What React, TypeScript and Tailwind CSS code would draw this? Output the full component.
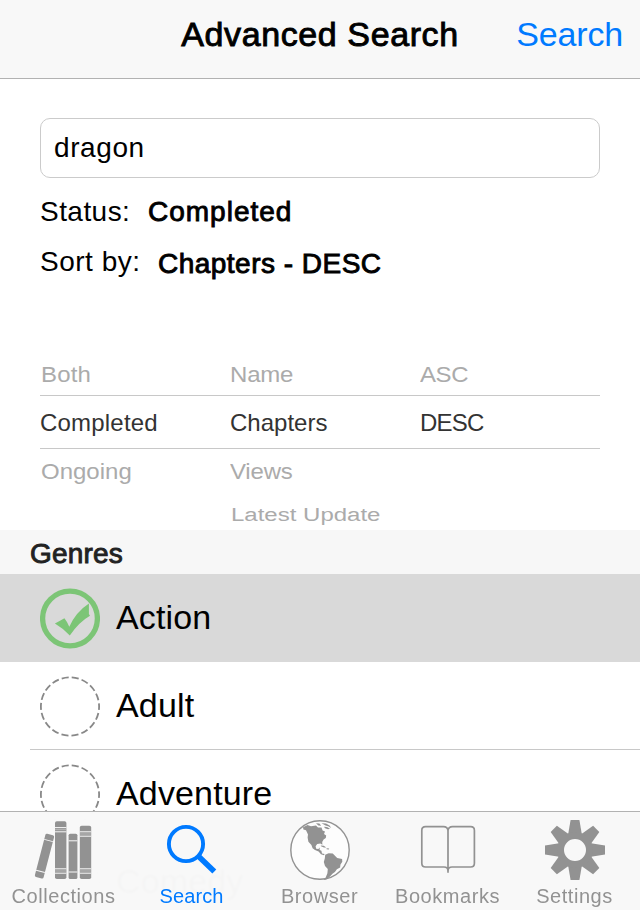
import React from "react";

const GRAY = "#929292";

function CollectionsIcon() {
  return (
    <svg className="h-[60px] w-[60px] shrink-0" viewBox="0 0 60 60" fill={GRAY}>
      <g transform="translate(16 15.3) rotate(14.6)">
        <rect x="-4.6" y="-0.8" width="9" height="44.6" rx="1.6" />
        <path d="M-4.6 5.4h9M-4.6 37.4h9" stroke="#f8f8f8" strokeWidth="1" />
      </g>
      <rect x="21" y="1.3" width="11.4" height="57.8" rx="1.8" />
      <rect x="34.6" y="13.7" width="8.8" height="45.4" rx="1.6" />
      <rect x="45.8" y="5.7" width="11.4" height="53.4" rx="1.8" />
      <path
        d="M21 7.6h11.4M21 11.8h11.4M21 48.8h11.4M21 53.2h11.4M34.6 20.8h8.8M34.6 52h8.8M45.8 11.8h11.4M45.8 16.2h11.4M45.8 48.8h11.4M45.8 53.2h11.4"
        stroke="#f8f8f8"
        strokeWidth="1"
      />
      <path d="M21 9.7h11.4M21 51h11.4M45.8 14h11.4M45.8 51h11.4" stroke="#c4c4c4" strokeWidth=".8" />
    </svg>
  );
}

function SearchIcon() {
  return (
    <svg className="h-[60px] w-[60px] shrink-0" viewBox="0 0 60 60" fill="none" stroke="#007aff">
      <circle cx="24" cy="24" r="17.1" strokeWidth="3.9" />
      <path d="M36.2 36 52.3 51.6" strokeWidth="5.6" />
    </svg>
  );
}

function GlobeIcon() {
  return (
    <svg className="h-[60px] w-[60px] shrink-0" viewBox="0 0 60 60" fill={GRAY}>
      <circle cx="30" cy="30" r="29.2" fill="#fdfdfd" stroke={GRAY} strokeWidth="1.4" />
      <path d="M13 7.2 17.5 5 21 6.2 26 5.6 28 7.6 31.5 7.4 32.6 10.4 35 11.4 34 14 36.2 15.4 35.8 18 33.6 19.4 32.2 22 32.4 24.8 30.4 23.4 27.2 24 25.6 26.2 26.2 28.8 28.4 29 29.8 27.6 29.6 30 31.4 30.8 32 33.4 34.6 34 34 35.2 31 34.2 28.6 31.6 25 30 22.6 28.2 21.4 25 18.4 21.8 17.6 17.6 18 14.4 16 10.2 13.4 9.4Z" />
      <path d="m26 3.2 3.4.3 1.8 2.3-2.8-.3ZM31.5 3.2 36 3.4l3.6 2 1.6 2.7-2.4-1.6-3.2-.9ZM34 6.8l3 .2 3 1.8-2 .4-3-1ZM30.8 25.6l3 .2 2.4 1.6-2.2 0-3-1.1ZM36.6 28.2l2.6.4-.4 1-2.2-.3Z" />
      <path d="m35.2 34.8 3.4-1.6 4.2.4 2.4 2.3 2 2.2 4.9 1 .2 2.6-1.8 2.8-.4 3-3.2 1.8-2 2.6-2.4 1.8-2.5 2.8-3 2.6-3.4 1.2 2.2-3 1.6-4 .4-4.3-2.8-3-1.2-4 1-3.4Z" />
    </svg>
  );
}

function BookIcon() {
  return (
    <svg className="h-[60px] w-[60px] shrink-0" viewBox="0 0 60 60" fill="none" stroke={GRAY} strokeWidth="1.7">
      <path d="M30 52.7V10.5Q29.5 6.7 25.5 6.7H7.5Q3.8 6.7 3.8 10.4V43.3Q3.8 47 7.5 47H26Q30 47 30 51Q30 47 34 47H52.7Q56.4 47 56.4 43.3V10.4Q56.4 6.7 52.7 6.7H34.5Q30.5 6.7 30 10.5" />
    </svg>
  );
}

function GearIcon() {
  return (
    <svg className="h-[60px] w-[60px] shrink-0" viewBox="-30 -30 60 60">
      <g fill={GRAY}>
        {[0, 45, 90, 135, 180, 225, 270, 315].map((angle) => (
          <path key={angle} d="M-4.4-30H4.4L6.8-16H-6.8Z" transform={`rotate(${angle})`} />
        ))}
      </g>
      <circle r="14.4" fill="none" stroke={GRAY} strokeWidth="6.8" />
    </svg>
  );
}

function CheckedMark() {
  return (
    <svg className="h-[61px] w-[60px]" viewBox="0 0 60 61" fill="#7cc576">
      <circle cx="30" cy="30.5" r="27.4" fill="none" stroke="#7cc576" strokeWidth="5.3" />
      <path d="M14.9 35.4Q20 32.8 24.4 30.2Q27.5 34 29.3 38.8Q36 24 48.9 15.6V26L50 27.8Q39 34 29.8 47.6Q23 40 14.9 35.4Z" />
    </svg>
  );
}

function EmptyMark() {
  return (
    <svg className="h-[61px] w-[60px]" viewBox="0 0 60 61">
      <circle cx="30" cy="30.5" r="29.1" fill="none" stroke="#888" strokeWidth="1.8" strokeDasharray="7.1 3.06" strokeDashoffset="3.6" />
    </svg>
  );
}

function Genre({ name, checked = false }: { name: string; checked?: boolean }) {
  return (
    <div className={checked ? "flex h-[88px] items-start bg-[#d9d9d9] pl-10" : "flex h-[88px] items-start pl-10"}>
      <div className="pt-[14px]">{checked ? <CheckedMark /> : <EmptyMark />}</div>
      <span className="pl-4 text-[34px] leading-[86px] tracking-[0.15px]">{name}</span>
    </div>
  );
}

function Tab({ label, icon, active = false }: { label: string; icon: React.ReactNode; active?: boolean }) {
  return (
    <div
      className={
        active
          ? "flex w-32 flex-col items-center tracking-[0.1px] text-[#007aff]"
          : "flex w-32 flex-col items-center tracking-[0.55px] text-[#929292] last:-ml-px"
      }
    >
      {icon}
      <span className="-ml-px text-[20px] leading-[32px]">{label}</span>
    </div>
  );
}

export default function App() {
  return (
    <div className="relative flex h-[910px] w-[640px] flex-col overflow-hidden bg-white font-['Liberation_Sans',Arial,sans-serif] text-black">
      <header className="grid h-[79px] shrink-0 grid-cols-[1fr_auto_1fr] border-b border-[#b2b2b2] bg-[#f8f8f8] text-[34px] leading-[68px]">
        <span />
        <h1 className="tracking-[0.6px] [-webkit-text-stroke:0.9px_#000]">Advanced Search</h1>
        <span className="pr-[17px] text-right tracking-[-0.15px] text-[#007aff]">Search</span>
      </header>

      <section className="flex h-[451px] shrink-0 flex-col px-10 pt-[39px]">
        <div className="h-[60px] rounded-[10px] border border-[#cbcbcb] pl-[13px] text-[28px] leading-[57px] tracking-[0.6px]">dragon</div>
        <div className="flex h-[50px] pt-[14px] text-[28px] leading-[40px]">
          <span className="w-[108px] tracking-[0.45px]">Status:</span>
          <span className="tracking-[1px] [-webkit-text-stroke:0.9px_#000]">Completed</span>
        </div>
        <div className="flex h-[50px] pt-[14px] text-[28px] leading-[40px]">
          <span className="w-[118px] tracking-[0.5px]">Sort by:</span>
          <span className="pt-[2px] tracking-[0.48px] [-webkit-text-stroke:0.9px_#000]">Chapters - DESC</span>
        </div>

        <div className="mt-[76px] flex flex-col text-[24px] text-[#ababab]">
          <div className="grid h-[41px] grid-cols-[190px_190px_1fr] leading-[40px]">
            <span className="origin-left scale-y-95 pl-px tracking-[0.2px]">Both</span>
            <span className="origin-left scale-y-95 tracking-[-0.2px]">Name</span>
            <span className="origin-left scale-y-95 tracking-[-0.4px]">ASC</span>
          </div>
          <div className="grid h-[54px] grid-cols-[190px_190px_1fr] border-y border-[#c8c8c8] leading-[54px] text-[#333]">
            <span className="tracking-[0.2px]">Completed</span>
            <span>Chapters</span>
            <span className="tracking-[-0.8px]">DESC</span>
          </div>
          <div className="grid h-[44px] grid-cols-[190px_190px_1fr] leading-[44px]">
            <span className="origin-left scale-y-95 pl-px">Ongoing</span>
            <span className="origin-left scale-y-95 tracking-[-0.2px]">Views</span>
          </div>
          <div className="grid h-[36px] grid-cols-[190px_190px_1fr] leading-[44px]">
            <span />
            <span className="origin-left scale-y-80 whitespace-nowrap pl-px">Latest Update</span>
          </div>
        </div>
      </section>

      <h2 className="h-[44px] shrink-0 bg-[#f7f7f7] pl-[30px] text-[28px] leading-[47px] tracking-[0.2px] text-[#222] [-webkit-text-stroke:0.9px_#222]">Genres</h2>
      <main className="flex shrink-0 flex-col">
        <Genre name="Action" checked />
        <Genre name="Adult" />
        <div className="-mt-px ml-[30px] h-px bg-[#c8c8c8]" />
        <Genre name="Adventure" />
        <Genre name="Comedy" />
      </main>

      <nav className="absolute inset-x-0 bottom-0 flex h-[99px] border-t border-[#b2b2b2] bg-[#f8f8f8]/[0.987] pt-2 backdrop-blur-[1px]">
        <Tab label="Collections" icon={<CollectionsIcon />} />
        <Tab label="Search" icon={<SearchIcon />} active />
        <Tab label="Browser" icon={<GlobeIcon />} />
        <Tab label="Bookmarks" icon={<BookIcon />} />
        <Tab label="Settings" icon={<GearIcon />} />
      </nav>
    </div>
  );
}
